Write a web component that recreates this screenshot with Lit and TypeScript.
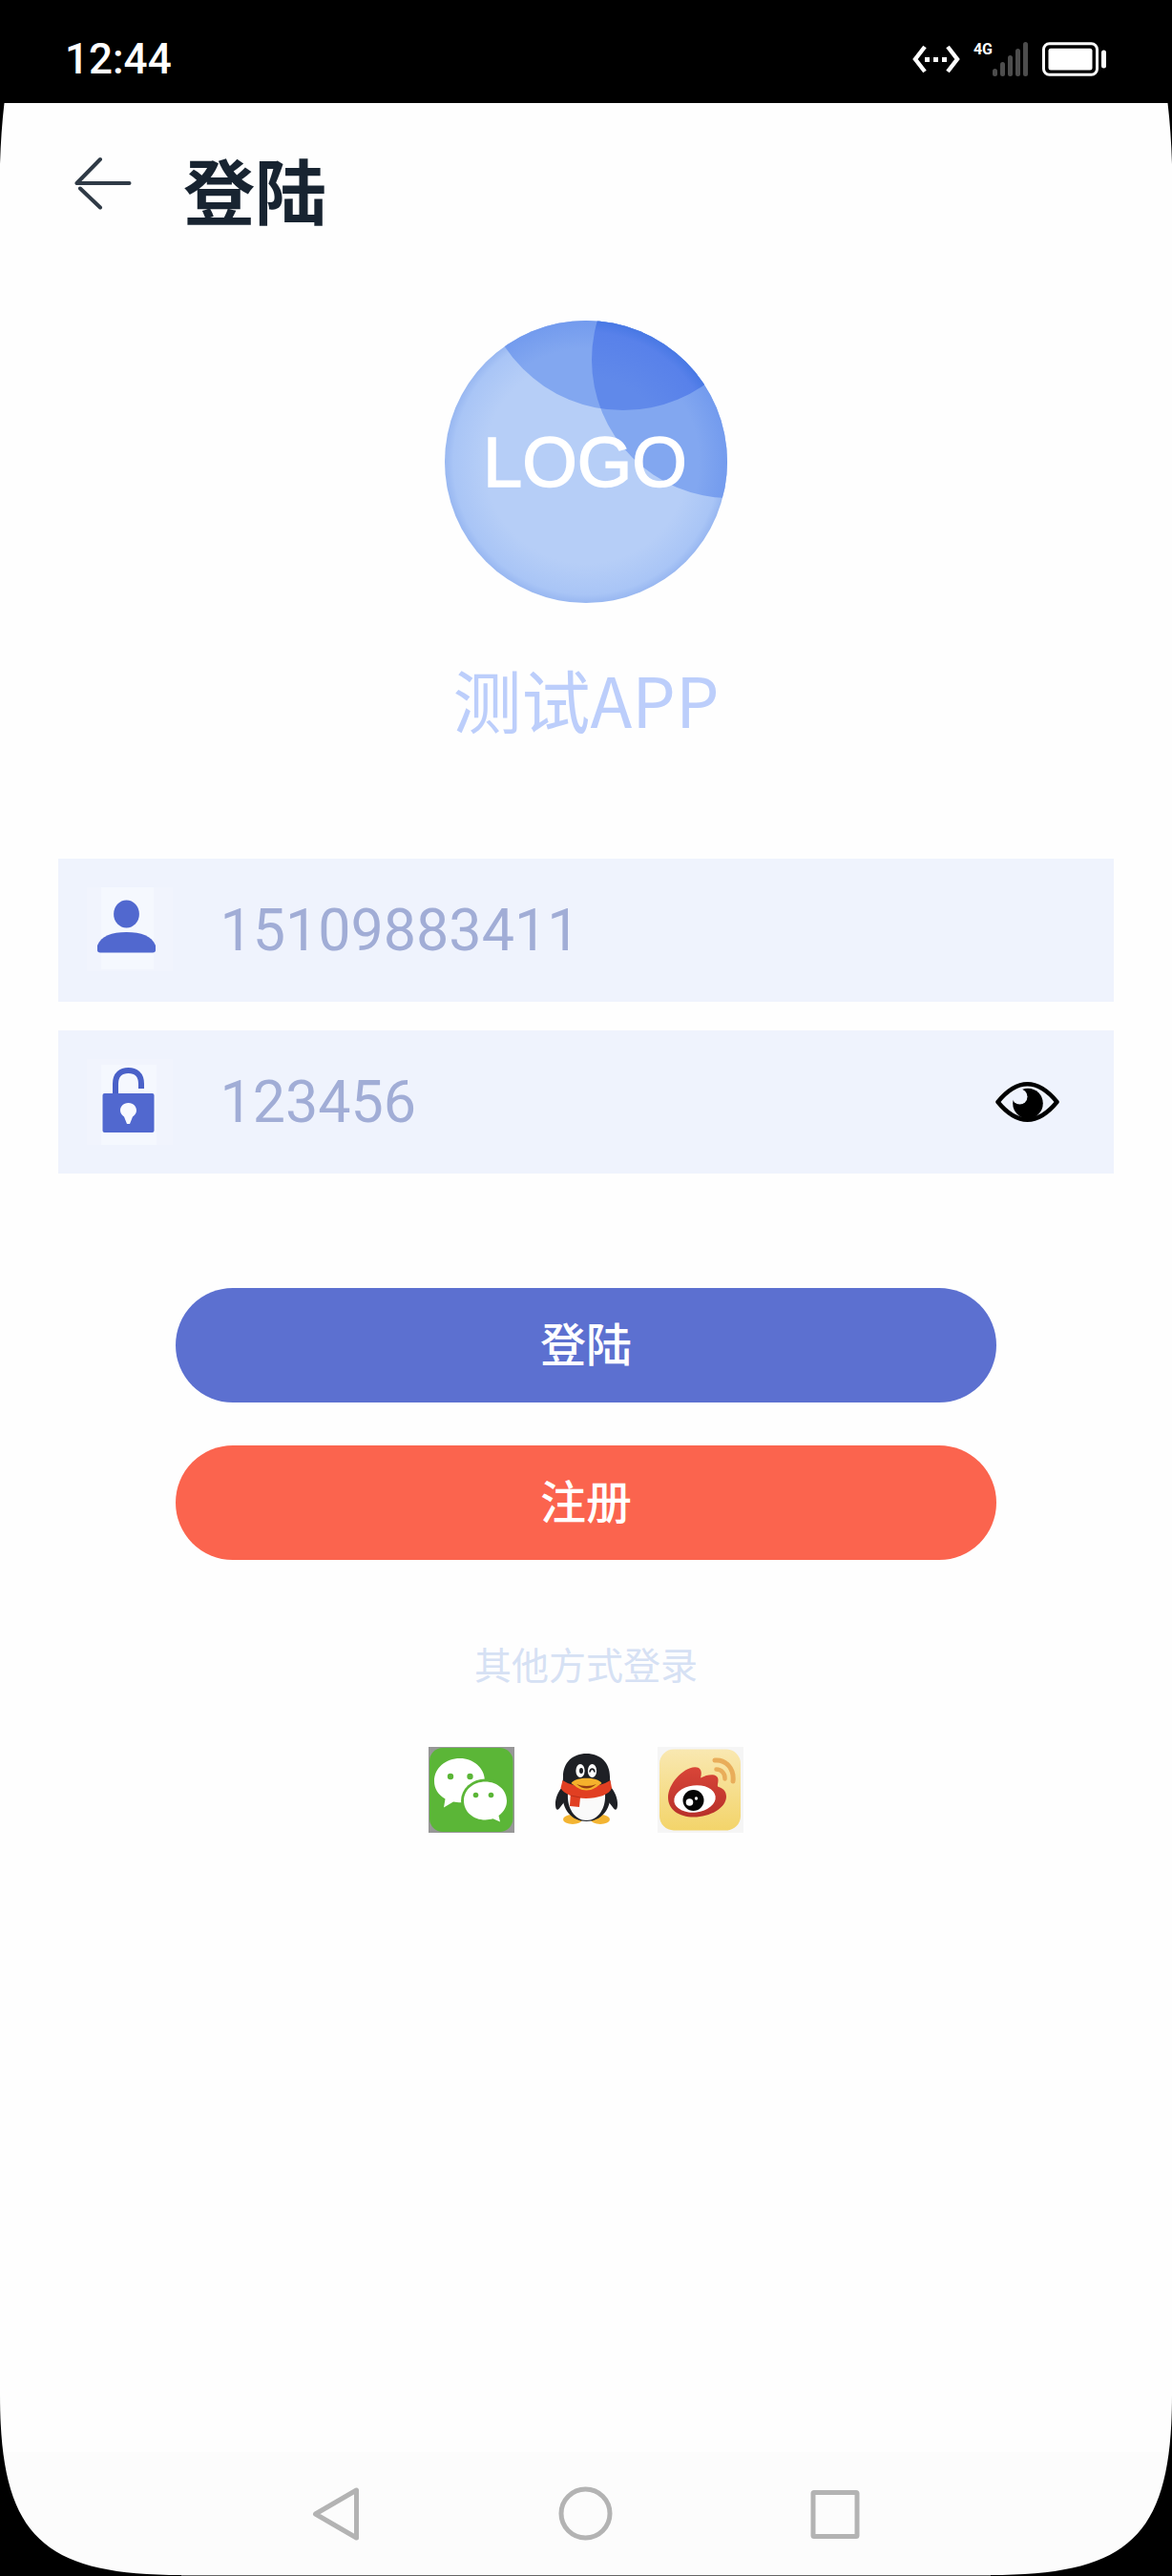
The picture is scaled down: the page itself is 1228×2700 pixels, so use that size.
import { LitElement, html, css, svg } from "lit";
import { customElement, property, state } from "lit/decorators.js";

const FONT = css`Roboto, "Noto Sans CJK SC", sans-serif`;

@customElement("status-bar")
class StatusBar extends LitElement {
  static styles = css`
    :host {
      display: flex;
      align-items: center;
      justify-content: space-between;
      height: 108px;
      padding: 16px 68px 0;
      box-sizing: border-box;
      background: #000;
      color: #fff;
      font-family: ${FONT};
    }
    .time {
      font-size: 44px;
      line-height: 56px;
      font-weight: 500;
    }
    .status {
      display: flex;
      align-items: center;
    }
    .link {
      margin-right: 14px;
    }
    .network {
      align-self: flex-start;
      font-size: 16px;
      line-height: 16px;
      font-weight: 700;
    }
    .battery {
      margin-left: 14px;
    }
    svg {
      display: block;
    }
  `;

  render() {
    return html`
      <span class="time">12:44</span>
      <div class="status">
        <svg class="link" width="50" height="30" viewBox="0 0 50 30" aria-hidden="true">
          <path d="M13 2L3 15L13 28M37 2L47 15L37 28" fill="none" stroke="#fff" stroke-width="4.4" />
          <path d="M13 13h5v5h-5zM22 13h5v5h-5zM31 13h5v5h-5z" fill="#fff" />
        </svg>
        <span class="network">4G</span>
        <svg width="38" height="36" viewBox="0 0 38 36" aria-hidden="true">
          ${[0, 1, 2, 3, 4].map(
            (i) => svg`<rect x=${i * 8} y=${28 - i * 7} width="5" height=${8 + i * 7} rx="2.5" fill="#4d4d4d" />`
          )}
        </svg>
        <svg class="battery" width="68" height="36" viewBox="0 0 68 36" aria-hidden="true">
          <rect x="1.5" y="1.8" width="56" height="32.4" rx="6" fill="none" stroke="#fff" stroke-width="3" />
          <rect x="6.5" y="6.8" width="46" height="22.6" rx="2.5" fill="#fff" />
          <rect x="62" y="8.5" width="5" height="19" rx="2.5" fill="#fff" />
        </svg>
      </div>
    `;
  }
}

@customElement("app-logo")
class AppLogo extends LitElement {
  static styles = css`
    :host {
      display: block;
      width: 300px;
      height: 300px;
    }
    svg {
      display: block;
    }
    .word {
      font-family: "Liberation Sans", sans-serif;
      font-size: 74px;
    }
  `;

  render() {
    return html`
      <svg width="300" height="300" viewBox="0 0 300 300" role="img">
        <defs>
          <radialGradient id="base">
            <stop offset="0.72" stop-color="#b6cef7" />
            <stop offset="0.94" stop-color="#a9c5f6" />
            <stop offset="1" stop-color="#98b7f1" />
          </radialGradient>
          <radialGradient id="deep" gradientUnits="userSpaceOnUse" cx="150" cy="149" r="148">
            <stop offset="0.6" stop-color="#6089ea" />
            <stop offset="0.92" stop-color="#5881ea" />
            <stop offset="1" stop-color="#4878e4" />
          </radialGradient>
          <radialGradient id="mid" gradientUnits="userSpaceOnUse" cx="150" cy="149" r="148">
            <stop offset="0.8" stop-color="#82a7f0" />
            <stop offset="1" stop-color="#739bee" />
          </radialGradient>
          <clipPath id="disc"><circle cx="150" cy="149" r="148" /></clipPath>
          <clipPath id="upper"><circle cx="189" cy="-54" r="149" /></clipPath>
        </defs>
        <circle cx="150" cy="149" r="148" fill="url(#base)" />
        <g clip-path="url(#disc)">
          <circle cx="189" cy="-54" r="149" fill="url(#mid)" />
          <circle cx="301" cy="42" r="145" fill="url(#mid)" />
          <g clip-path="url(#upper)"><circle cx="301" cy="42" r="145" fill="url(#deep)" /></g>
        </g>
        <text class="word" x="149" y="175" text-anchor="middle" fill="#fff" stroke="#fff" stroke-width="1.5">LOGO</text>
      </svg>
    `;
  }
}

@customElement("login-form")
class LoginForm extends LitElement {
  @state() private revealed = true;

  static styles = css`
    :host {
      display: block;
      font-family: ${FONT};
    }
    .fields {
      display: flex;
      flex-direction: column;
      gap: 30px;
      padding: 0 5%;
    }
    .field {
      display: flex;
      align-items: center;
      height: 150px;
      padding: 0 57px 0 30px;
      box-sizing: border-box;
      background: #eff3fd;
    }
    .field label {
      flex: none;
    }
    .field svg {
      display: block;
    }
    .field input {
      flex: 1;
      min-width: 0;
      height: 90px;
      margin-left: 49px;
      padding: 0;
      border: 0;
      outline: 0;
      background: none;
      color: #a1add6;
      font-family: inherit;
      font-size: 61px;
    }
    .field input::placeholder {
      color: #a1add6;
      opacity: 1;
    }
    .reveal {
      padding: 0;
      border: 0;
      background: none;
    }
    .actions {
      display: flex;
      flex-direction: column;
      gap: 45px;
      padding: 0 15%;
      margin-top: 120px;
    }
    .action {
      height: 120px;
      padding: 0 0 8px;
      border: 0;
      border-radius: 60px;
      color: #fff;
      font-family: inherit;
      font-size: 48px;
      font-weight: 500;
    }
    .sign-in {
      background: #5c70d0;
    }
    .sign-up {
      background: #fb644e;
    }
  `;

  private toggle() {
    this.revealed = !this.revealed;
  }

  render() {
    return html`
      <form @submit=${(e: Event) => e.preventDefault()}>
        <div class="fields">
          <div class="field">
            <label for="account" aria-label="账号">
              <svg width="90" height="90" viewBox="0 0 90 90" aria-hidden="true">
                <rect width="90" height="88" fill="#f1f4fd" />
                <rect x="15" width="55" height="86" fill="#f5f8fe" />
                <ellipse cx="41.500" cy="28" rx="13.400" ry="14.600" fill="#5168cf" />
                <path d="M11 61C15 51 26 47 41.500 47S68 51 72 61V66C72 67.500 71 68.500 69 68.500H14C12 68.500 11 67.500 11 66Z" fill="#5168cf" />
              </svg>
            </label>
            <input id="account" type="text" placeholder="15109883411" />
          </div>
          <div class="field">
            <label for="secret" aria-label="密码">
              <svg width="90" height="90" viewBox="0 0 90 90" aria-hidden="true">
                <rect width="90" height="90" fill="#f1f4fd" />
                <rect x="15" y="6" width="58" height="84" fill="#f5f8fe" />
                <path d="M30 38V26C30 16 36 12 43.500 12S57 16 57 26V31" fill="none" stroke="#4a61c8" stroke-width="6" />
                <rect x="16.500" y="36" width="54" height="41" rx="2" fill="#5168cf" />
                <path d="M43.500 46C38 46 35 50 35 54C35 57 37 59 39 60.500L42 68H45L48 60.500C50 59 52 57 52 54C52 50 49 46 43.500 46Z" fill="#f8faff" />
              </svg>
            </label>
            <input id="secret" type=${this.revealed ? "text" : "password"} placeholder="123456" />
            <button class="reveal" type="button" aria-label="显示密码" @click=${this.toggle}>
              <svg width="67" height="42" viewBox="0 0 67 42" aria-hidden="true">
                <circle cx="34" cy="22.500" r="15.800" fill="#000" />
                <circle cx="25.500" cy="15.500" r="8" fill="#eff3fd" />
                <path d="M2.500 21C14 7 24 2.300 33.500 2.300S53 7 64.500 21C53 35 43 39.700 33.500 39.700S14 35 2.500 21Z" fill="none" stroke="#000" stroke-width="4.500" stroke-linejoin="round" />
              </svg>
            </button>
          </div>
        </div>
        <div class="actions">
          <button class="action sign-in" type="submit">登陆</button>
          <button class="action sign-up" type="button">注册</button>
        </div>
      </form>
    `;
  }
}

const wechat = svg`
  <rect width="90" height="90" fill="#979797" />
  <rect x="1" y="1" width="87.500" height="88" rx="14" fill="#5bb637" />
  <path d="M33 12C18 12 6 22 6 36C6 43.500 10 50 17.500 54.500L16 63.500L26 57.500C28.500 58 31 58.300 34 58.300C48 58 59 49 59 36C59 22 47 12 33 12Z" fill="#fff" />
  <circle cx="23" cy="31" r="3.200" fill="#5bb637" />
  <circle cx="43.500" cy="31" r="3.200" fill="#5bb637" />
  <ellipse cx="59.500" cy="56.500" rx="25.500" ry="23" fill="#5bb637" />
  <path d="M59.500 36.500C47 36.500 37 45 37 56.500S47 76.500 59.500 76.500C62.500 76.500 65 76 67.500 75.300L75 78.500L73.500 72C79 68 82 62.500 82 56.500C82 45 72 36.500 59.500 36.500Z" fill="#fff" />
  <circle cx="49.500" cy="50.500" r="2.800" fill="#5bb637" />
  <circle cx="65.500" cy="50.500" r="2.800" fill="#5bb637" />
`;

const qq = svg`
  <ellipse cx="31" cy="76" rx="10" ry="5" fill="#f3b432" />
  <ellipse cx="60" cy="76" rx="10" ry="5" fill="#f3b432" />
  <path d="M21 41C16 46 12.500 54 13 61C13.300 66 15 67 17 64.500L22 58ZM70 41C75 46 78.500 54 78 61C77.700 66 76 67 74 64.500L69 58Z" fill="#1e2025" />
  <path d="M45.500 7C31 7 21 16.500 21 31C21 36 20 40 20 48C20 66 30 78 45.500 78S71 66 71 48C71 40 70 36 70 31C70 16.500 60 7 45.500 7Z" fill="#1e2025" />
  <path d="M26 49H65C66 64 58 77 45.500 77S25 64 26 49Z" fill="#fafafa" />
  <path d="M20.500 35C34 44 57 44 70.500 35L72 43C70 50 57 54 45 54C33 54 21 49 18.500 43Z" fill="#e13f22" />
  <path d="M29 46L39.500 48L38 63L28 62Z" fill="#e13f22" />
  <path d="M29 51L39 53" fill="none" stroke="#b92e17" stroke-width="1" />
  <ellipse cx="39" cy="25" rx="4.600" ry="7" fill="#fff" />
  <ellipse cx="51.500" cy="25" rx="4.600" ry="7" fill="#fff" />
  <ellipse cx="40" cy="25" rx="2" ry="3" fill="#1e2025" />
  <path d="M49 26.500C49.500 22 53.500 22 54 26.500" fill="none" stroke="#1e2025" stroke-width="1.600" />
  <path d="M29.500 38C34 31 57 31 61.500 38C56 42 52 45.500 45.500 45.500S35 42 29.500 38Z" fill="#f5b12c" />
  <path d="M35 39C41 41.500 50 41.500 56 39C52 42 49 43.500 45.500 43.500S39 42 35 39Z" fill="#943b12" />
`;

const weibo = svg`
  <defs>
    <linearGradient id="gold" x1="0" y1="0" x2="0" y2="1">
      <stop offset="0" stop-color="#f9e8b1" />
      <stop offset="1" stop-color="#f3d46a" />
    </linearGradient>
    <linearGradient id="flame" x1="0" y1="0" x2="0" y2="1">
      <stop offset="0" stop-color="#d94538" />
      <stop offset="1" stop-color="#b8302a" />
    </linearGradient>
  </defs>
  <rect width="90" height="90" fill="#f5f5f5" />
  <rect x="2" y="2.500" width="85" height="85" rx="15" fill="url(#gold)" />
  <path d="M11 53C11 39 26 22 39 21.200C45.500 21 47 26 45 32.500C54 27.500 64 28 63.500 35C63.500 38 62.500 40 63 41.500C68 43 72 46 72 52C72 64 55 73.500 38 73.500C22 73.500 11 65.500 11 53Z" fill="url(#flame)" />
  <ellipse cx="39" cy="54.500" rx="21.800" ry="14.200" transform="rotate(-7 39 54.500)" fill="#fff" />
  <circle cx="37.500" cy="56" r="11" fill="#050505" />
  <circle cx="33.500" cy="58" r="3.800" fill="#fff" />
  <circle cx="40.500" cy="54" r="1.700" fill="#fff" />
  <path d="M60 14C71 13 80.500 22 79 36" fill="none" stroke="#e9ad5a" stroke-width="5" stroke-linecap="round" />
  <path d="M61.500 23.500C67 23.500 71 28 70.500 33.500" fill="none" stroke="#e9ad5a" stroke-width="4.500" stroke-linecap="round" />
`;

@customElement("social-login")
class SocialLogin extends LitElement {
  static styles = css`
    :host {
      display: flex;
      flex-direction: column;
      align-items: center;
      gap: 54px;
      font-family: ${FONT};
    }
    .hint {
      margin: 0;
      color: #d6e1f4;
      font-size: 39px;
      line-height: 60px;
    }
    .providers {
      display: flex;
      gap: 30px;
    }
    .provider {
      padding: 0;
      border: 0;
      background: none;
    }
    svg {
      display: block;
    }
  `;

  private providers = [
    { name: "微信", art: wechat },
    { name: "QQ", art: qq },
    { name: "微博", art: weibo },
  ];

  render() {
    return html`
      <p class="hint">其他方式登录</p>
      <div class="providers">
        ${this.providers.map(
          (p) => html`
            <button class="provider" type="button" aria-label=${p.name}>
              <svg width="90" height="90" viewBox="0 0 90 90" aria-hidden="true">${p.art}</svg>
            </button>
          `
        )}
      </div>
    `;
  }
}

@customElement("system-nav")
class SystemNav extends LitElement {
  static styles = css`
    :host {
      display: flex;
      align-items: center;
      justify-content: center;
      gap: 202px;
      height: 130px;
      box-sizing: border-box;
      border-bottom: 1px solid #666;
      background: #fcfcfc;
    }
    button {
      padding: 0;
      border: 0;
      background: none;
    }
    svg {
      display: block;
      fill: none;
      stroke: #b3b3b3;
      stroke-width: 5;
      stroke-linejoin: round;
    }
  `;

  render() {
    return html`
      <button type="button" aria-label="返回">
        <svg width="60" height="60" viewBox="0 0 60 60"><path d="M51.500 5V55L8.500 30Z" /></svg>
      </button>
      <button type="button" aria-label="主页">
        <svg width="60" height="60" viewBox="0 0 60 60"><circle cx="29.500" cy="29.500" r="25.500" /></svg>
      </button>
      <button type="button" aria-label="最近任务">
        <svg width="60" height="60" viewBox="0 0 60 60"><rect x="6" y="7.500" width="46" height="46" rx="1" /></svg>
      </button>
    `;
  }
}

@customElement("screen-corner")
class ScreenCorner extends LitElement {
  @property() edge: "top" | "bottom" = "top";

  static styles = css`
    :host {
      display: block;
      line-height: 0;
    }
  `;

  render() {
    return this.edge === "top"
      ? html`<svg width="5" height="64" viewBox="0 0 5 64"><path d="M0 0H4.500Q1 30 0 64Z" /></svg>`
      : html`<svg width="190" height="190" viewBox="0 0 190 190"><path d="M0 0C0 148 44 189 190 189V190H0Z" /></svg>`;
  }
}

@customElement("app-root")
class AppRoot extends LitElement {
  static styles = css`
    :host {
      display: block;
      font-family: ${FONT};
    }
    .screen {
      position: relative;
      display: flex;
      flex-direction: column;
      min-height: 100vh;
      background: #fefefe;
    }
    .header {
      display: flex;
      align-items: flex-start;
      gap: 54px;
      padding: 46px 78px 26px;
    }
    .back {
      padding: 10px 0;
      border: 0;
      background: none;
    }
    .back svg {
      display: block;
    }
    .title {
      margin: 0;
      color: #182431;
      font-size: 75px;
      line-height: 100px;
      font-weight: 700;
    }
    .content {
      flex: 1;
      display: flex;
      flex-direction: column;
      align-items: stretch;
      padding: 55px 0;
    }
    .brand {
      display: flex;
      flex-direction: column;
      align-items: center;
      gap: 47px;
      margin-bottom: 118px;
    }
    .name {
      margin: 0;
      color: #bccefb;
      font-family: "Noto Sans CJK SC", sans-serif;
      font-size: 72px;
      line-height: 100px;
      font-weight: 400;
    }
    .social {
      margin-top: 82px;
    }
    .corner {
      position: absolute;
      pointer-events: none;
    }
    .top {
      top: 108px;
    }
    .bottom {
      bottom: 0;
    }
    .left {
      left: 0;
    }
    .right {
      right: 0;
      transform: scaleX(-1);
    }
  `;

  render() {
    return html`
      <div class="screen">
        <status-bar></status-bar>
        <header class="header">
          <button class="back" type="button" aria-label="返回">
            <svg width="60" height="56" viewBox="0 0 60 56" aria-hidden="true">
              <path d="M27 3L2.500 28M6 33.500L27 53.500M2.500 28H57.500" fill="none" stroke="#2f3a46" stroke-width="4" stroke-linecap="round" />
            </svg>
          </button>
          <h1 class="title">登陆</h1>
        </header>
        <main class="content">
          <div class="brand">
            <app-logo></app-logo>
            <h2 class="name">测试APP</h2>
          </div>
          <login-form></login-form>
          <social-login class="social"></social-login>
        </main>
        <system-nav></system-nav>
        <screen-corner class="corner top left" edge="top"></screen-corner>
        <screen-corner class="corner top right" edge="top"></screen-corner>
        <screen-corner class="corner bottom left" edge="bottom"></screen-corner>
        <screen-corner class="corner bottom right" edge="bottom"></screen-corner>
      </div>
    `;
  }
}
